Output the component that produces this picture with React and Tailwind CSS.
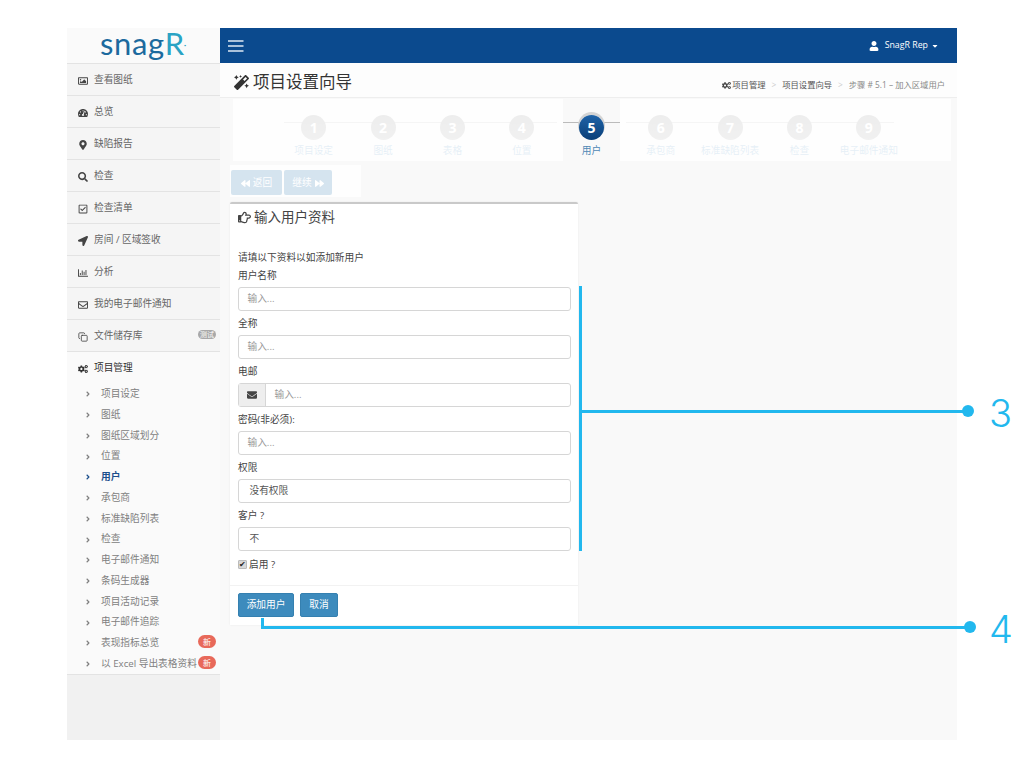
import React from "react";
import { Copy } from "lucide-react";
import {
  FaRegImage,
  FaTachometerAlt,
  FaMapMarkerAlt,
  FaSearch,
  FaRegCheckSquare,
  FaLocationArrow,
  FaRegChartBar,
  FaRegEnvelope,
  FaCogs,
  FaMagic,
  FaRegHandPointRight,
  FaEnvelope,
  FaUser,
  FaBackward,
  FaForward,
  FaAngleRight,
  FaCaretDown,
} from "react-icons/fa";

const mainMenu = [
  { label: "查看图纸", icon: FaRegImage },
  { label: "总览", icon: FaTachometerAlt },
  { label: "缺陷报告", icon: FaMapMarkerAlt },
  { label: "检查", icon: FaSearch },
  { label: "检查清单", icon: FaRegCheckSquare },
  { label: "房间 / 区域签收", icon: FaLocationArrow },
  { label: "分析", icon: FaRegChartBar },
  { label: "我的电子邮件通知", icon: FaRegEnvelope },
  { label: "文件储存库", icon: Copy, beta: true },
];

const subMenu = [
  { label: "项目设定" },
  { label: "图纸" },
  { label: "图纸区域划分" },
  { label: "位置" },
  { label: "用户", active: true },
  { label: "承包商" },
  { label: "标准缺陷列表" },
  { label: "检查" },
  { label: "电子邮件通知" },
  { label: "条码生成器" },
  { label: "项目活动记录" },
  { label: "电子邮件追踪" },
  { label: "表现指标总览", isNew: true },
  { label: "以 Excel 导出表格资料", isNew: true },
];

function Sidebar() {
  return (
    <aside className="w-[153px] shrink-0 bg-[#f1f1f1] flex flex-col">
      <div className="h-[35px] bg-[#fafafa] flex items-center justify-center text-[31px] leading-none text-[#1c6a9e] font-['Lato',sans-serif] tracking-[0.6px] pb-1">
        snag<span className="text-[#2aa3c4]">R</span>
        <span className="text-[#2aa3c4] text-[10px] -ml-px">·</span>
      </div>
      {mainMenu.map((item) => {
        const Icon = item.icon;
        return (
          <div
            key={item.label}
            className="h-8 flex items-center border-t border-[#e3e3e3] bg-[#f5f5f5] pl-[11px] pr-1 pt-[2px] text-[9.7px] text-[#666]"
          >
            <span className="w-4 shrink-0 text-[#444] text-[10px]">
              <Icon className="w-[10px] h-[10px]" />
            </span>
            <span>{item.label}</span>
            {item.beta && (
              <span className="ml-auto mb-[5px] rounded-full bg-[#a8a8a8] text-white text-[7px] leading-[9px] w-[18px] text-center">
                测试
              </span>
            )}
          </div>
        );
      })}
      <div className="bg-[#fafafa] border-t border-[#e3e3e3] border-b">
        <div className="h-[31px] flex items-center pl-[11px] pt-[2px] text-[9.7px] text-[#333]">
          <span className="w-4 shrink-0 text-[#333] text-[10px]">
            <FaCogs />
          </span>
          <span>项目管理</span>
        </div>
        <div className="pb-[0.5px]">
          {subMenu.map((item) => (
            <div
              key={item.label}
              className={`h-[20.75px] flex items-center pl-[17px] pr-1 pt-[2px] text-[9.7px] whitespace-nowrap ${
                item.active ? "text-[#1c4f8c] font-bold" : "text-[#808080]"
              }`}
            >
              <FaAngleRight className="w-2 text-[8px] mr-[9px] shrink-0" />
              <span>{item.label}</span>
              {item.isNew && (
                <span className="ml-auto -mt-[3px] rounded-full bg-[#e8695a] text-white text-[8px] leading-[13px] w-[18px] text-center">
                  新
                </span>
              )}
            </div>
          ))}
        </div>
      </div>
    </aside>
  );
}

function TopBar() {
  return (
    <header className="h-[35px] bg-[#0b4a8e] flex items-center justify-between pl-2 pr-[18px] text-white">
      <svg width="16" height="12" viewBox="0 0 16 12" fill="none" stroke="#dfe9f3" strokeWidth="1.3">
        <path d="M0 1h15.5M0 6h15.5M0 11h15.5" />
      </svg>
      <div className="flex items-center text-[8.8px]">
        <FaUser className="text-[10px] mr-[6px]" />
        <span>SnagR Rep</span>
        <FaCaretDown className="text-[8px] ml-[3px]" />
      </div>
    </header>
  );
}

function PageHeader() {
  return (
    <div className="h-[35px] bg-[#fdfdfd] border-b border-[#eeeeee] flex items-center justify-between pl-[14px] pr-[12px]">
      <h1 className="flex items-center pt-[4px] text-[16.5px] text-[#333] font-normal">
        <FaMagic className="text-[15px] mr-[4px]" />
        项目设置向导
      </h1>
      <div className="flex items-center pt-[10px] text-[8.3px] text-[#555]">
        <FaCogs className="text-[9px] mr-[1px] text-[#444]" />
        <span>项目管理</span>
        <span className="mx-[6px] text-[#ccc]">&gt;</span>
        <span>项目设置向导</span>
        <span className="mx-[6px] text-[#ccc]">&gt;</span>
        <span className="text-[#888]">步骤 # 5.1 – 加入区域用户</span>
      </div>
    </div>
  );
}

function Step({ number, label, active, first, last, width }) {
  return (
    <div className={`relative shrink-0 flex flex-col items-center pt-[16px] ${width}`}>
      <div
        className={`absolute top-[23px] h-px ${active ? "bg-[#bbb]" : "bg-[#ccc]"} ${
          first ? "left-1/2 -ml-[30px] right-0" : last ? "left-0 right-[10px]" : "left-0 right-0"
        }`}
      ></div>
      <div
        className={`relative w-[25px] h-[25px] rounded-full flex items-center justify-center text-[14px] font-bold ${
          active
            ? "bg-gradient-to-b from-[#1f63a8] to-[#0a3f78] text-white shadow-[0_-2px_0_1px_#d4d4d4]"
            : "bg-gradient-to-b from-[#a6a6a6] to-[#b8b8b8] text-white"
        }`}
      >
        {number}
      </div>
      <div
        className={`mt-[4px] text-[9.7px] whitespace-nowrap ${
          active ? "text-[#4f88b5]" : "text-[#7fb0d4]"
        }`}
      >
        {label}
      </div>
    </div>
  );
}

function Wizard() {
  return (
    <div className="ml-[13px] mt-[1px] w-[718px] h-[62px] flex">
      <div className="relative w-[330px] flex pl-[46px]">
        <Step number="1" label="项目设定" first width="w-[69.4px]" />
        <Step number="2" label="图纸" width="w-[69.4px]" />
        <Step number="3" label="表格" width="w-[69.4px]" />
        <Step number="4" label="位置" width="w-[69.4px]" />
        <div className="absolute inset-0 bg-white/80"></div>
      </div>
      <Step number="5" label="用户" active width="w-[57px]" />
      <div className="relative w-[331px] flex pl-[6px]">
        <Step number="6" label="承包商" width="w-[69.4px]" />
        <Step number="7" label="标准缺陷列表" width="w-[69.4px]" />
        <Step number="8" label="检查" width="w-[69.4px]" />
        <Step number="9" label="电子邮件通知" last width="w-[69.4px]" />
        <div className="absolute inset-0 bg-white/80"></div>
      </div>
    </div>
  );
}

function Field({ label, placeholder, value, icon }) {
  return (
    <div>
      <div className="h-[24px] flex items-center text-[9.7px] text-[#444] pt-[2px]">{label}</div>
      <div className="h-[24px] flex border border-[#d6d6d6] rounded-[3px] bg-white text-[9.7px]">
        {icon && (
          <div className="w-[27px] shrink-0 bg-[#eeeeee] border-r border-[#d6d6d6] flex items-center justify-center text-[#444] text-[10px]">
            <FaEnvelope />
          </div>
        )}
        {value ? (
          <div className="pl-[10.5px] pt-px flex items-center text-[#555]">{value}</div>
        ) : (
          <div className="pl-[8.5px] pt-px flex items-center text-[#999]">{placeholder}</div>
        )}
      </div>
    </div>
  );
}

function UserForm() {
  return (
    <section className="ml-[10px] mt-[5px] w-[348px] h-[423px] bg-white border-t-2 border-[#c9c9c9] rounded-t-[2px] shadow-[0_0_2px_rgba(0,0,0,0.08)] flex flex-col">
      <h2 className="h-[27px] flex items-center pl-[8px] text-[13.5px] text-[#444] font-normal">
        <FaRegHandPointRight className="text-[13px] mr-[3px]" />
        输入用户资料
      </h2>
      <div className="pl-[8px] pr-[7px] flex-1">
        <p className="mt-[20px] h-[14px] flex items-center text-[9.7px] text-[#444]">
          请填以下资料以如添加新用户
        </p>
        <div className="-mt-[2px]">
          <Field label="用户名称" placeholder="输入..." />
          <Field label="全称" placeholder="输入..." />
          <Field label="电邮" placeholder="输入..." icon />
          <Field label="密码(非必须):" placeholder="输入..." />
          <Field label="权限" value="没有权限" />
          <Field label="客户 ?" value="不" />
        </div>
        <label className="mt-[7px] flex items-center text-[9.7px] text-[#444]">
          <span className="w-[9px] h-[9px] mr-[2px] -mt-[2px] bg-[#d8d8d8] border border-[#bbb] rounded-[1px] flex items-center justify-center text-[8px] leading-none text-[#222]">
            ✔
          </span>
          启用 ?
        </label>
      </div>
      <div className="h-[40px] border-t border-[#f2f2f2] flex items-start gap-[6px] px-[8px] pt-[7px]">
        <button className="w-[56px] h-[24px] bg-[#3d8bbd] border border-[#3580b0] rounded-[2px] text-white text-[9.7px]">
          添加用户
        </button>
        <button className="w-[38px] h-[24px] bg-[#3d8bbd] border border-[#3580b0] rounded-[2px] text-white text-[9.7px]">
          取消
        </button>
      </div>
    </section>
  );
}

function Annotations() {
  return (
    <>
      <div className="absolute left-[579px] top-[286px] w-[3px] h-[265px] bg-[#22b8ee]"></div>
      <div className="absolute left-[580px] top-[410px] w-[388px] h-[3px] bg-[#22b8ee]"></div>
      <div className="absolute left-[962px] top-[405px] w-[12px] h-[12px] rounded-full bg-[#22b8ee]"></div>
      <div className="absolute left-[989px] top-[391px] text-[38px] leading-[44px] font-light text-[#22b8ee] font-['Inter',sans-serif]">
        3
      </div>
      <div className="absolute left-[261px] top-[618px] w-[3px] h-[10px] bg-[#22b8ee]"></div>
      <div className="absolute left-[261px] top-[626px] w-[709px] h-[3px] bg-[#22b8ee]"></div>
      <div className="absolute left-[964px] top-[621px] w-[12px] h-[12px] rounded-full bg-[#22b8ee]"></div>
      <div className="absolute left-[989px] top-[607px] text-[38px] leading-[44px] font-light text-[#22b8ee] font-['Inter',sans-serif]">
        4
      </div>
    </>
  );
}

export default function App() {
  return (
    <div className="relative w-[1024px] h-[768px] overflow-hidden bg-white font-['Open_Sans','Noto_Sans_CJK_SC',sans-serif]">
      <div className="ml-[67px] pt-[28px] w-[890px] h-[740px] flex">
        <Sidebar />
        <div className="flex-1 bg-[#f9f9f9] flex flex-col">
          <TopBar />
          <PageHeader />
          <Wizard />
          <div className="ml-[10px] mt-[4px] w-[131px] h-[32px] bg-white/80 flex gap-[2px] pl-px pt-[5px]">
            <button className="w-[51px] h-[25px] bg-[#d5e4ef] rounded-[2px] text-white text-[9.7px] flex items-center justify-center gap-[3px] pt-px">
              <FaBackward className="text-[9px]" />
              返回
            </button>
            <button className="w-[48px] h-[25px] bg-[#d5e4ef] rounded-[2px] text-white text-[9.7px] flex items-center justify-center gap-[3px] pt-px">
              继续
              <FaForward className="text-[9px]" />
            </button>
          </div>
          <UserForm />
        </div>
      </div>
      <Annotations />
    </div>
  );
}
